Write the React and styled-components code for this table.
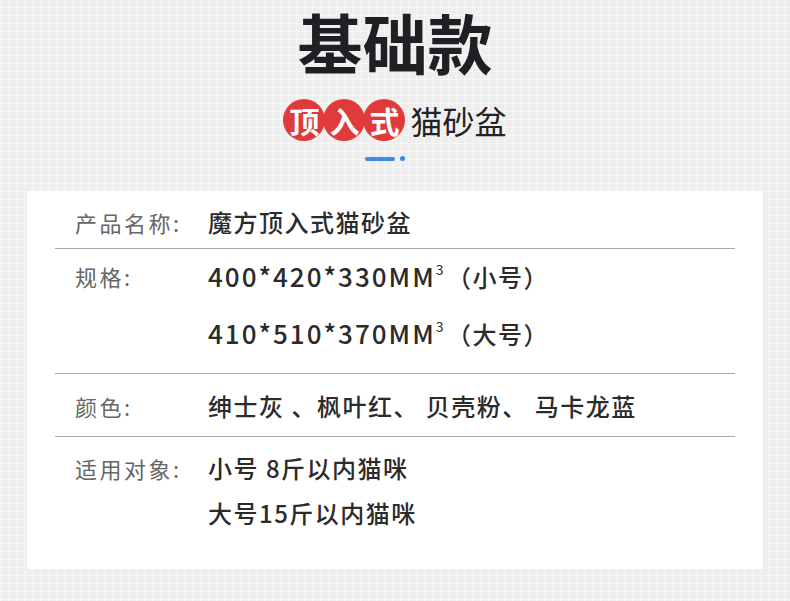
import styled, { createGlobalStyle } from 'styled-components'

const GlobalStyle = createGlobalStyle`
  html, body {
    margin: 0;
    padding: 0;
  }
  body {
    font-family: "Noto Sans CJK SC", sans-serif;
    background-color: #eeeeee;
    background-image:
      linear-gradient(90deg, #f6f6f6 1px, transparent 1px),
      linear-gradient(0deg, #f6f6f6 1px, transparent 1px);
    background-size: 8px 8px;
  }
`

const Page = styled.div`
  width: 790px;
  height: 601px;
  padding-top: 1px;
  box-sizing: border-box;
  display: flex;
  flex-direction: column;
  align-items: center;
`

const Title = styled.h1`
  margin: -7px 0 -4px;
  line-height: 95px;
  font-size: 65px;
  font-weight: 700;
  color: #1f1f24;
`

const Subtitle = styled.div`
  display: flex;
  align-items: center;
  margin-top: 14px;
  height: 42px;
`

const Badge = styled.span`
  width: 42px;
  height: 42px;
  border-radius: 50%;
  background: #e03b3b;
  color: #fff;
  display: flex;
  align-items: center;
  justify-content: center;
  font-size: 30px;
  font-weight: 700;
  & + & {
    margin-left: -2px;
  }
`

const SubText = styled.span`
  margin-left: 5px;
  font-size: 32px;
  color: #222;
`

const Accent = styled.div`
  display: flex;
  align-items: center;
  gap: 5px;
  margin-top: 15px;
  margin-right: 20px;
`

const Dash = styled.span`
  width: 30px;
  height: 4px;
  border-radius: 2px;
  background: #3b8be0;
`

const Dot = styled.span`
  width: 5px;
  height: 5px;
  border-radius: 50%;
  background: #3b8be0;
`

const Card = styled.div`
  box-sizing: border-box;
  width: 736px;
  height: 378px;
  margin-top: 30px;
  padding: 0 28px;
  background: #fff;
`

const Row = styled.div`
  display: grid;
  grid-template-columns: 133px 1fr;
  padding: ${p => p.$top}px 20px ${p => p.$bottom}px;
  border-bottom: ${p => (p.$last ? 'none' : '1px solid #a9a9a9')};
`

const Label = styled.div`
  line-height: 36px;
  font-size: 22px;
  color: #666;
  letter-spacing: 2.5px;
`

const Values = styled.div`
  display: flex;
  flex-direction: column;
  gap: ${p => p.$gap || 0}px;
`

const Value = styled.div`
  line-height: 36px;
  font-size: 24px;
  font-weight: 500;
  color: #2b2b2b;
  letter-spacing: 1.5px;
  white-space: nowrap;
`

const Num = styled.span`
  font-size: 26px;
  letter-spacing: 2px;
`

const Sup = styled.sup`
  font-size: 14px;
  font-weight: 400;
  vertical-align: 12px;
  line-height: 0;
  margin: 0 2px 0 0;
`

export default function App() {
  return (
    <>
      <GlobalStyle />
      <Page>
        <Title>基础款</Title>
        <Subtitle>
          <Badge>顶</Badge>
          <Badge>入</Badge>
          <Badge>式</Badge>
          <SubText>猫砂盆</SubText>
        </Subtitle>
        <Accent>
          <Dash />
          <Dot />
        </Accent>
        <Card>
          <Row $top={13} $bottom={8}>
            <Label>产品名称:</Label>
            <Values>
              <Value>魔方顶入式猫砂盆</Value>
            </Values>
          </Row>
          <Row $top={9} $bottom={21}>
            <Label>规格:</Label>
            <Values $gap={20}>
              <Value><Num>400*420*330MM</Num><Sup>3</Sup>（小号）</Value>
              <Value><Num>410*510*370MM</Num><Sup>3</Sup>（大号）</Value>
            </Values>
          </Row>
          <Row $top={14} $bottom={12}>
            <Label>颜色:</Label>
            <Values>
              <Value>绅士灰 、枫叶红、 贝壳粉、 马卡龙蓝</Value>
            </Values>
          </Row>
          <Row $top={13} $bottom={0} $last>
            <Label>适用对象:</Label>
            <Values $gap={9}>
              <Value>小号 8斤以内猫咪</Value>
              <Value>大号15斤以内猫咪</Value>
            </Values>
          </Row>
        </Card>
      </Page>
    </>
  )
}
